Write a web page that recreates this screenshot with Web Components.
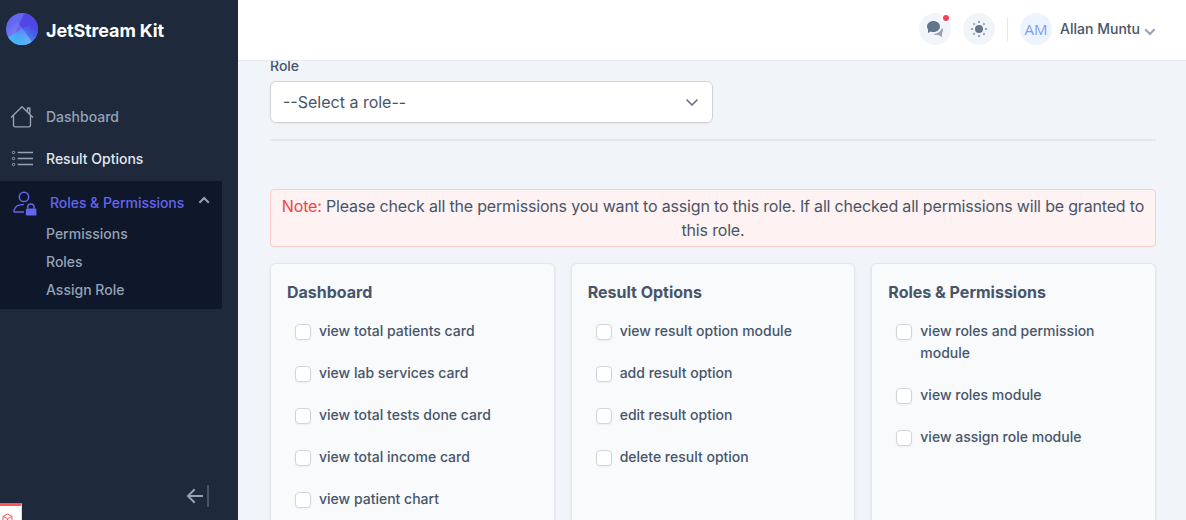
<!DOCTYPE html>
<html lang="en">
<head>
<meta charset="utf-8">
<title>JetStream Kit</title>
<style>
html,body{margin:0;height:100%;overflow:hidden}
body{font:400 16px/24px Inter,"Liberation Sans",sans-serif;color:#475569;background:#f1f5f9}
</style>
</head>
<body>
<app-shell></app-shell>
<script>
const define = (name, html) => {
  const t = document.createElement('template');
  t.innerHTML = '<style>*{box-sizing:border-box}svg{display:block;flex:none}</style>' + html;
  customElements.define(name, class extends HTMLElement {
    constructor() {
      super();
      this.attachShadow({ mode: 'open' }).append(t.content.cloneNode(true));
    }
  });
};

define('brand-logo', `<style>
:host{display:flex;align-items:center;gap:8px;color:#fff;font:700 18px/28px Inter,sans-serif;letter-spacing:-.13px;white-space:nowrap}
.name{padding-top:3px}
</style>
<svg width="32" height="32" viewBox="0 0 32 32"><defs>
<linearGradient x1="28.538%" y1="20.229%" x2="100%" y2="108.156%" id="a"><stop stop-color="#A5B4FC" stop-opacity="0" offset="0%"/><stop stop-color="#A5B4FC" offset="100%"/></linearGradient>
<linearGradient x1="88.638%" y1="29.267%" x2="22.42%" y2="100%" id="b"><stop stop-color="#38BDF8" stop-opacity="0" offset="0%"/><stop stop-color="#38BDF8" offset="100%"/></linearGradient></defs>
<rect width="32" height="32" rx="16" fill="#6366F1"/>
<path d="M18.277.16C26.035 1.267 32 7.938 32 16c0 8.837-7.163 16-16 16a15.937 15.937 0 01-10.426-3.863L18.277.161z" fill="#4F46E5"/>
<path d="M7.404 2.503l18.339 26.19A15.93 15.93 0 0116 32C7.163 32 0 24.837 0 16 0 10.327 2.952 5.344 7.404 2.503z" fill="url(#a)"/>
<path d="M2.223 24.14L29.777 7.86A15.926 15.926 0 0132 16c0 8.837-7.163 16-16 16-5.864 0-10.991-3.154-13.777-7.86z" fill="url(#b)"/></svg>
<span class="name"><slot></slot></span>`);

define('nav-item', `<style>
:host{display:flex;align-items:center;height:42px;padding-left:10px;color:#94a3b8;font:500 14px/22px Inter,sans-serif;white-space:nowrap}
:host([active]){color:#e2e8f0}
.icon{width:24px;margin-right:12px;color:#94a3b8}
</style><span class="icon"><slot name="icon"></slot></span><slot></slot>`);

define('nav-group', `<style>
:host{display:block;width:222px;height:128px;margin-top:1px;background:#0f172a;border-radius:0 2px 2px 0;color:#94a3b8;font:500 14px/22px Inter,sans-serif}
.head{display:flex;align-items:center;height:42px;padding-left:12px;color:#6366f1;white-space:nowrap}
.head svg:first-child{margin:4px 12px 0 0}
.head span{padding-top:2px;letter-spacing:-.04px}
.head svg:last-child{margin-left:14px}
.subs{display:grid;gap:6px;padding-left:46px}
</style>
<div class="head">
<svg width="26" height="26" viewBox="0 0 26 26" fill="none" stroke="#6366f1" stroke-width="1.5">
<circle cx="12" cy="5.9" r="4.7"/><path d="M12 21H2.5Q1.8 21 2 19.5Q3 13.5 11.8 13.5"/>
<path d="M15.7 17.5v-1.2a3.2 3.2 0 016.4 0v1.2"/><rect x="13.9" y="17.6" width="10.5" height="7" rx="1.2" fill="#6366f1" stroke="none"/></svg>
<span><slot name="title"></slot></span>
<svg width="12" height="12" viewBox="0 0 12 12" fill="#94a3b8"><path transform="rotate(180 6 6)" d="M5.9 11.4L.5 6l1.4-1.4 4 4 4-4L11.3 6z"/></svg>
</div><div class="subs"><slot></slot></div>`);

define('side-bar', `<style>
:host{display:flex;flex-direction:column;width:238px;height:520px;background:#1e293b;flex:none}
brand-logo{height:32px;margin:13px 0 51px 6px}
.foot{display:flex;justify-content:flex-end;margin:auto 28px 12px 0}
</style>
<brand-logo>JetStream Kit</brand-logo>
<nav>
<nav-item><svg slot="icon" width="24" height="24" viewBox="0 0 24 24" fill="none" stroke="currentColor" stroke-width="1.4" stroke-linejoin="round"><path d="M1 12.4L12 1.7l11 10.7M3.5 10.2v10q0 1.7 1.7 1.7h13.6q1.7 0 1.7-1.7v-10M17.5 6.8V3h2.3v6"/></svg>Dashboard</nav-item>
<nav-item active><svg slot="icon" width="24" height="24" viewBox="0 0 24 24" fill="none" stroke="currentColor" stroke-width="1.3"><path d="M7.7 5.5H23M7.7 11.5H23M7.7 17.5H23"/><circle cx="3.5" cy="5.5" r="1.2" stroke-width="1"/><circle cx="3.5" cy="11.5" r="1.2" stroke-width="1"/><circle cx="3.5" cy="17.5" r="1.2" stroke-width="1"/></svg>Result Options</nav-item>
<nav-group><span slot="title">Roles &amp; Permissions</span><span>Permissions</span><span>Roles</span><span>Assign Role</span></nav-group>
</nav>
<div class="foot"><svg width="24" height="24" viewBox="0 0 24 24"><g transform="rotate(180 12 12)"><path fill="#94a3b8" d="M19.586 11l-5-5L16 4.586 23.414 12 16 19.414 14.586 18l5-5H7v-2z"/><path fill="#475569" d="M3 23H1V1h2z"/></g></svg></div>`);

define('round-button', `<style>
:host{display:flex;align-items:center;justify-content:center;position:relative;width:32px;height:32px;border-radius:50%;background:#f1f5f9}
:host([avatar]){background:#ebf4ff;color:#7f9cf5;font:400 15px/24px "Open Sans","Noto Sans",sans-serif}
.dot{display:none;position:absolute;top:0;right:0;width:10px;height:10px;border:2px solid #fff;border-radius:50%;background:#f43f5e}
:host([alert]) .dot{display:block}
</style><slot></slot><i class="dot"></i>`);

define('top-bar', `<style>
:host{display:flex;align-items:center;justify-content:flex-end;height:61px;padding:0 30px 3px 0;background:#fff;border-bottom:1px solid #e2e8f0;flex:none;box-sizing:border-box}
.sep{width:1px;height:24px;background:#e2e8f0;margin:0 12px}
.name{font:500 14px/22px Inter,sans-serif;margin:0 4px 0 8px;white-space:nowrap}
round-button+round-button{margin-left:12px}
.chev{margin-top:3px}
</style>
<round-button alert><svg width="16" height="16" viewBox="0 0 16 16"><path fill="#64748b" d="M6.5 0C2.91 0 0 2.462 0 5.5c0 1.075.37 2.074 1 2.922V12l2.699-1.542A7.454 7.454 0 006.5 11c3.59 0 6.5-2.462 6.5-5.5S10.09 0 6.5 0z"/><path fill="#94a3b8" d="M16 9.5c0-.987-.429-1.897-1.147-2.639C14.124 10.348 10.66 13 6.5 13c-.103 0-.202-.018-.305-.021C7.231 13.617 8.556 14 10 14c.449 0 .886-.04 1.307-.11L15 16v-4c.63-.695 1-1.566 1-2.5z"/></svg></round-button>
<round-button><svg width="16" height="16" viewBox="0 0 16 16"><path fill="#94a3b8" d="M7 0h2v2H7zM12.88 1.637l1.414 1.415-1.415 1.413-1.413-1.414zM14 7h2v2h-2zM12.95 14.433l-1.414-1.413 1.413-1.415 1.415 1.414zM7 14h2v2H7zM2.98 14.364l-1.413-1.415 1.414-1.414 1.414 1.415zM0 7h2v2H0zM3.05 1.706 4.463 3.12 3.05 4.535 1.636 3.12z"/><circle fill="#64748b" cx="8" cy="8" r="4"/></svg></round-button>
<span class="sep"></span>
<round-button avatar>AM</round-button>
<span class="name">Allan Muntu</span>
<svg class="chev" width="12" height="12" viewBox="0 0 12 12" fill="#94a3b8"><path d="M5.9 11.4L.5 6l1.4-1.4 4 4 4-4L11.3 6z"/></svg>`);

define('role-select', `<style>
:host{display:block}
.label{font:500 14px/22px Inter,sans-serif;margin-bottom:4px}
.box{display:flex;align-items:center;justify-content:space-between;width:443px;height:42px;padding:0 10px 0 12px;background:#fff;border:1px solid #d1d5db;border-radius:6px;box-shadow:0 1px 2px rgba(0,0,0,.05)}
</style><div class="label"><slot name="label"></slot></div>
<div class="box"><slot></slot><svg width="20" height="20" viewBox="0 0 20 20" fill="none" stroke="#6b7280" stroke-width="1.7" stroke-linecap="round" stroke-linejoin="round"><path d="M5 8l5 5 5-5"/></svg></div>`);

define('note-box', `<style>
:host{display:block;height:58px;padding:4px 8px;border:1px solid #fecaca;border-radius:4px;background:#fef2f2;text-align:center;letter-spacing:-.011em;box-sizing:border-box}
b{font-weight:400;color:#ef4444}
</style><b><slot name="tag"></slot></b> <slot></slot>`);

define('check-row', `<style>
:host{display:flex;gap:8px;padding-left:8px;font:500 14px/22px Inter,sans-serif}
i{flex:none;width:16px;height:16px;margin-top:4px;background:#fff;border:1px solid #d1d5db;border-radius:4px;box-shadow:0 1px 2px rgba(0,0,0,.05)}
</style><i></i><span><slot></slot></span>`);

define('permission-card', `<style>
:host{display:block;min-width:0;height:330px;padding:16px;background:#f8fafc;border:1px solid #e5e7eb;border-radius:6px;box-shadow:0 1px 3px rgba(0,0,0,.08);box-sizing:border-box}
.title{font-weight:700;margin-bottom:16px}
.rows{display:grid;gap:20px}
</style><div class="title"><slot name="title"></slot></div><div class="rows"><slot></slot></div>`);

define('permissions-page', `<style>
:host{display:block;flex:1;min-height:0;overflow:hidden;padding:0 30px 0 32px}
role-select{margin-top:-6px}
.rule{height:2px;background:#e2e8f0;margin:16px 0 48px}
.cards{display:grid;grid-template-columns:repeat(3,minmax(0,1fr));gap:16px;margin-top:16px}
</style>
<role-select><span slot="label">Role</span><span>--Select a role--</span></role-select>
<div class="rule"></div>
<note-box><span slot="tag">Note:</span>Please check all the permissions you want to assign to this role. If all checked all permissions will be granted to this role.</note-box>
<div class="cards">
<permission-card><span slot="title">Dashboard</span><check-row>view total patients card</check-row><check-row>view lab services card</check-row><check-row>view total tests done card</check-row><check-row>view total income card</check-row><check-row>view patient chart</check-row></permission-card>
<permission-card><span slot="title">Result Options</span><check-row>view result option module</check-row><check-row>add result option</check-row><check-row>edit result option</check-row><check-row>delete result option</check-row></permission-card>
<permission-card><span slot="title">Roles &amp; Permissions</span><check-row>view roles and permission module</check-row><check-row>view roles module</check-row><check-row>view assign role module</check-row></permission-card>
</div>`);

define('debug-badge', `<style>
:host{display:block;position:absolute;left:0;bottom:0;width:22px;height:17px;background:#fff;border-top:3px solid #ff5555;border-right:1px solid #ddd;overflow:hidden;box-sizing:border-box}
svg{margin:7px 0 0 2px}
</style><svg width="11" height="12" viewBox="0 0 11 12" fill="none" stroke="#ff5555" stroke-width="1"><path d="M1 3.3L5.5 1 10 3.3v5.4L5.5 11 1 8.7zM1 3.3l4.5 2.4L10 3.3M5.5 5.7V11"/></svg>`);

define('app-shell', `<style>
:host{display:flex;position:relative;height:520px;overflow:hidden}
main{display:flex;flex-direction:column;flex:1;min-width:0}
</style><side-bar></side-bar><main><top-bar></top-bar><permissions-page></permissions-page></main><debug-badge></debug-badge>`);
</script>
</body>
</html>
